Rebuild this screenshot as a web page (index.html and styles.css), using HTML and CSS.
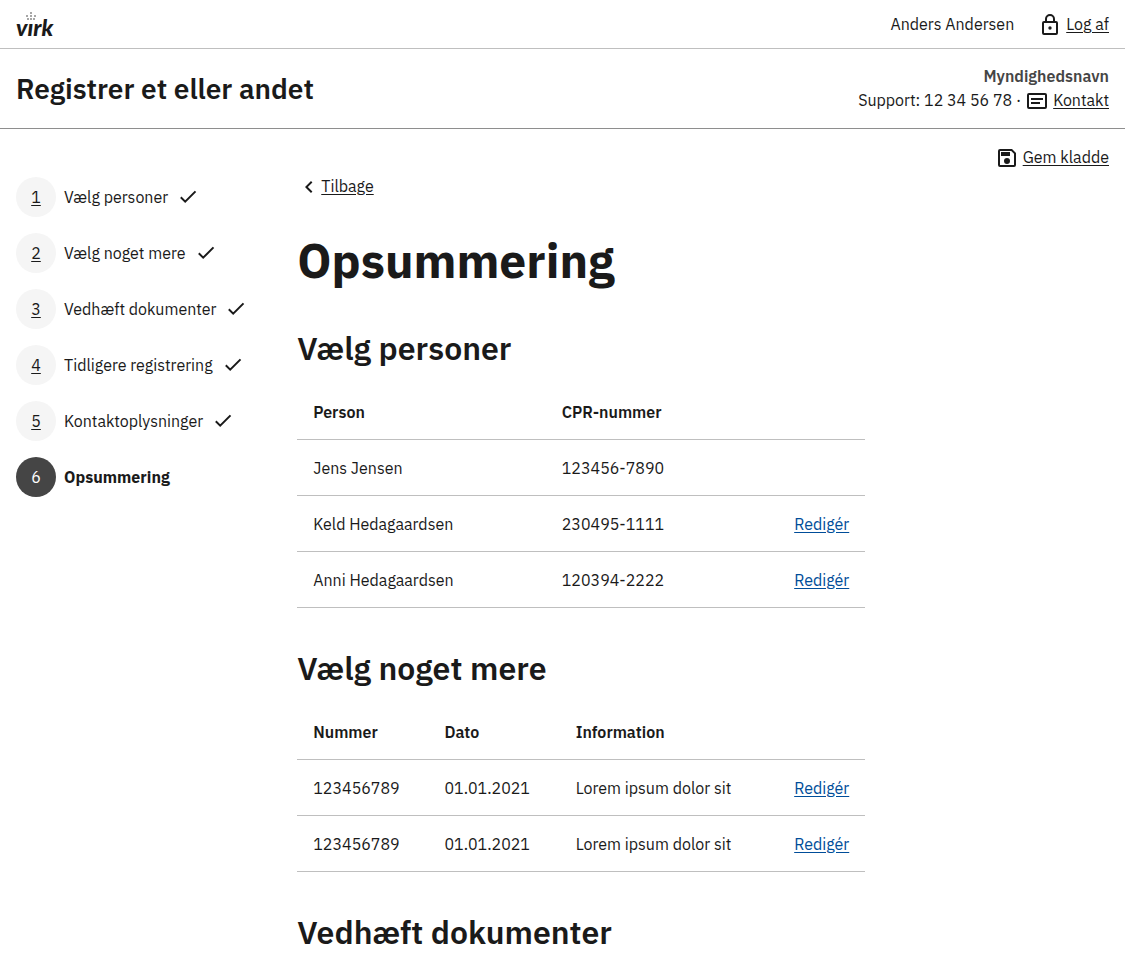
FILE: index.html
```html
<!DOCTYPE html>
<html lang="da">
<head>
<meta charset="utf-8">
<meta name="viewport" content="width=device-width, initial-scale=1">
<title>Opsummering - Virk</title>
<link rel="stylesheet" href="styles.css">
</head>
<body>
<svg class="sprite" aria-hidden="true">
  <symbol id="check" viewBox="0 0 24 24"><path d="M4.800 12.300 9.200 16.700 19.500 6.400" fill="none" stroke="currentColor" stroke-width="2"/></symbol>
</svg>
<header>
  <div class="portal">
    <a class="logo" href="#" aria-label="Virk">
      <svg width="48" height="32" viewBox="0 0 48 32" role="img">
        <text class="logo-text" x="0" y="28">vırk</text>
        <g class="crown"><circle cx="15" cy="5" r="1"/><circle cx="15" cy="8" r="1"/><circle cx="11" cy="8" r="1"/><circle cx="19" cy="8" r="1"/><circle cx="12" cy="11" r="1"/><circle cx="15" cy="11" r="1"/><circle cx="18" cy="11" r="1"/></g>
      </svg>
    </a>
    <div class="user">
      <span>Anders Andersen</span>
      <a class="icon-link" href="#"><svg class="icon" viewBox="0 -1 24 24" aria-hidden="true"><path d="M18 8h-1V6A5 5 0 0 0 7 6v2H6a2 2 0 0 0-2 2v10a2 2 0 0 0 2 2h12a2 2 0 0 0 2-2V10a2 2 0 0 0-2-2ZM9 6a3 3 0 0 1 6 0v2H9Zm9 14H6V10h12Zm-6-3.300a1.700 1.700 0 1 0 0-3.400 1.700 1.700 0 0 0 0 3.400Z"/></svg><span class="link">Log af</span></a>
    </div>
  </div>
  <div class="solution">
    <div class="solution-title">Registrer et eller andet</div>
    <div class="authority">
      <strong class="authority-name">Myndighedsnavn</strong>
      <div class="support"><span>Support: 12 34 56 78 ·</span><a class="icon-link" href="#"><svg class="icon" viewBox="0 -1 24 24" aria-hidden="true"><path d="M20 4H4a2 2 0 0 0-2 2v12a2 2 0 0 0 2 2h16a2 2 0 0 0 2-2V6a2 2 0 0 0-2-2Zm0 14H4V6h16ZM6 9h12v2H6Zm0 4h9v2H6Z"/></svg><span class="link">Kontakt</span></a></div>
    </div>
  </div>
</header>
<div class="page">
  <div class="actions">
    <a class="icon-link" href="#"><svg class="icon" viewBox="0 -1 24 24" aria-hidden="true"><path d="M17 3H5a2 2 0 0 0-2 2v14a2 2 0 0 0 2 2h14a2 2 0 0 0 2-2V7Zm2 16H5V5h11.200L19 7.800ZM12 12a3 3 0 1 0 0 6 3 3 0 0 0 0-6ZM6 6h9v4H6Z"/></svg><span class="link">Gem kladde</span></a>
  </div>
  <div class="columns">
    <nav class="steps" aria-label="Trin">
      <a class="step" href="#"><span class="number">1</span><span>Vælg personer</span><svg class="check"><use href="#check"/></svg></a>
      <a class="step" href="#"><span class="number">2</span><span>Vælg noget mere</span><svg class="check"><use href="#check"/></svg></a>
      <a class="step" href="#"><span class="number">3</span><span>Vedhæft dokumenter</span><svg class="check"><use href="#check"/></svg></a>
      <a class="step" href="#"><span class="number">4</span><span>Tidligere registrering</span><svg class="check"><use href="#check"/></svg></a>
      <a class="step" href="#"><span class="number">5</span><span>Kontaktoplysninger</span><svg class="check"><use href="#check"/></svg></a>
      <a class="step current" href="#" aria-current="step"><span class="number">6</span><span>Opsummering</span></a>
    </nav>
    <main>
      <a class="back" href="#"><svg class="icon" viewBox="0 0 24 24" aria-hidden="true"><path d="M15.410 8.410 14 7l-6 6 6 6 1.410-1.410L10.830 13z"/></svg><span class="link">Tilbage</span></a>
      <h1>Opsummering</h1>
      <section>
        <h2>Vælg personer</h2>
        <table class="persons">
          <thead><tr><th scope="col">Person</th><th scope="col">CPR-nummer</th><th></th></tr></thead>
          <tbody>
            <tr><td>Jens Jensen</td><td>123456-7890</td><td></td></tr>
            <tr><td>Keld Hedagaardsen</td><td>230495-1111</td><td><a class="edit" href="#">Redigér</a></td></tr>
            <tr><td>Anni Hedagaardsen</td><td>120394-2222</td><td><a class="edit" href="#">Redigér</a></td></tr>
          </tbody>
        </table>
      </section>
      <section>
        <h2>Vælg noget mere</h2>
        <table class="entries">
          <thead><tr><th scope="col">Nummer</th><th scope="col">Dato</th><th scope="col">Information</th><th></th></tr></thead>
          <tbody>
            <tr><td>123456789</td><td>01.01.2021</td><td>Lorem ipsum dolor sit</td><td><a class="edit" href="#">Redigér</a></td></tr>
            <tr><td>123456789</td><td>01.01.2021</td><td>Lorem ipsum dolor sit</td><td><a class="edit" href="#">Redigér</a></td></tr>
          </tbody>
        </table>
      </section>
      <section>
        <h2>Vedhæft dokumenter</h2>
      </section>
    </main>
  </div>
</div>
</body>
</html>
```
FILE: styles.css
```css
* { box-sizing: border-box; }
body {
  margin: 0;
  background: #fff;
  color: #1a1a1a;
  font: 400 16px/24px "IBM Plex Sans", "Noto Sans", sans-serif;
}
a { color: inherit; text-decoration: none; }
h1, h2 { margin: 0; font-weight: 600; }
.sprite { position: absolute; width: 0; height: 0; }
.icon { width: 24px; height: 24px; flex: none; fill: currentColor; }
.link { text-decoration: underline; text-underline-offset: 2px; }
.icon-link { display: inline-flex; align-items: center; gap: 4px; }

.portal {
  display: flex;
  justify-content: space-between;
  align-items: center;
  padding: 12px 16px;
  border-bottom: 1px solid #bfbfbf;
}
.logo { display: flex; height: 24px; align-items: center; }
.logo-text { font: italic 900 23px Lato, sans-serif; fill: #1a1a1a; }
.crown { fill: #8a8a8a; }
.user { display: flex; gap: 24px; }

.solution {
  display: flex;
  justify-content: space-between;
  align-items: flex-end;
  padding: 15px 16px 16px;
  border-bottom: 1px solid #8e8e8e;
}
.solution-title { font-size: 28px; line-height: 46px; font-weight: 600; }
.authority { text-align: right; }
.authority-name { font-weight: 600; color: #454545; }
.support { display: flex; gap: 4px; }

.page { padding: 16px 16px 8px; }
.actions { display: flex; justify-content: flex-end; }
.columns {
  display: grid;
  grid-template-columns: repeat(12, 1fr);
  column-gap: 32px;
}
.steps {
  grid-column: span 3;
  display: flex;
  flex-direction: column;
  gap: 16px;
  padding-top: 8px;
}
.step { display: flex; align-items: center; gap: 8px; }
.number {
  display: flex;
  align-items: center;
  justify-content: center;
  flex: none;
  width: 40px;
  height: 40px;
  border-radius: 50%;
  background: #f5f5f5;
  text-decoration: underline;
  text-underline-offset: 2px;
}
.check { width: 24px; height: 24px; flex: none; fill: currentColor; }
.current { font-weight: 700; }
.current .number { background: #454545; color: #fff; font-weight: 400; text-decoration: none; }

main { grid-column: span 9; max-width: 568px; padding-top: 5px; }
.back { display: flex; align-items: center; width: max-content; }
h1 { margin-top: 34px; font-size: 48px; line-height: 56px; font-weight: 700; }
section { margin-top: 40px; }
h2 { margin-bottom: 16px; font-size: 32px; line-height: 40px; }
table { width: 100%; border-collapse: separate; border-spacing: 0; table-layout: fixed; }
th, td { height: 56px; padding: 16px 16px 15px; text-align: left; border-bottom: 1px solid #bfbfbf; white-space: nowrap; }
th { font-weight: 600; }
th:last-child, td:last-child { text-align: right; }
.persons th:first-child { width: 43.75%; }
.persons th:last-child { width: 24%; }
.entries th { width: 23.1%; }
.entries th:nth-child(3) { width: 35%; }
.entries th:last-child { width: 18.8%; }
.edit { color: #004d99; text-decoration: underline; text-underline-offset: 2px; }
```
